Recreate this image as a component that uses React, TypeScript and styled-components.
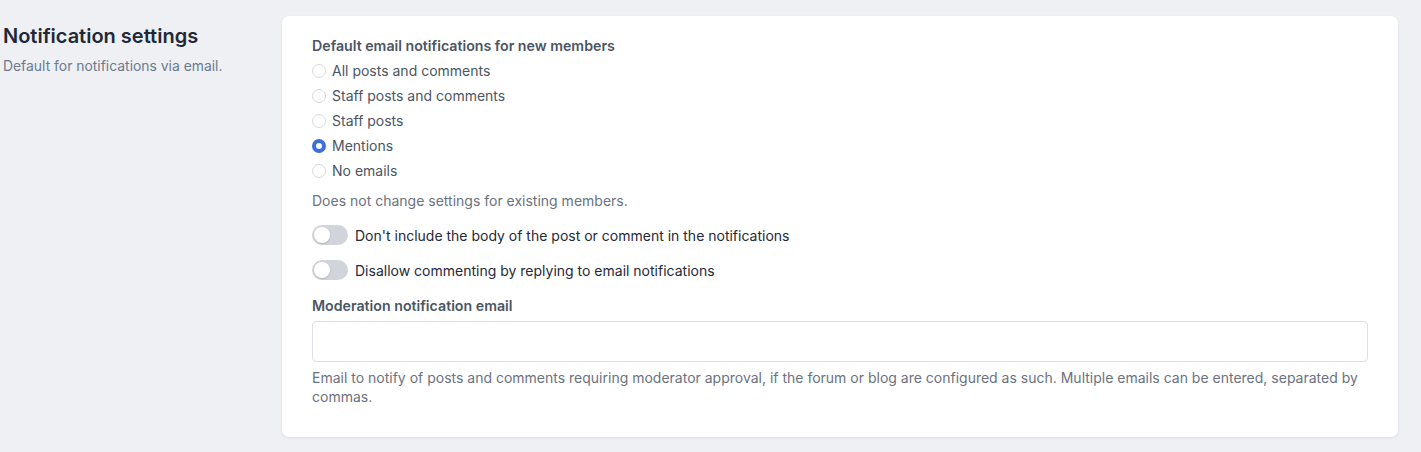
import React from 'react';
import styled, { createGlobalStyle } from 'styled-components';

const GlobalStyle = createGlobalStyle`
  html, body {
    margin: 0;
    padding: 0;
    background: #eff0f4;
    font-family: Inter, "Noto Sans", sans-serif;
  }
`;

const Page = styled.div`
  display: flex;
  align-items: flex-start;
  padding: 16px 23px 15px 3px;
  min-height: 452px;
  box-sizing: border-box;
`;

const Aside = styled.div`
  width: 279px;
  flex: none;
  padding-top: 7px;
`;

const Title = styled.h2`
  margin: 0;
  font-size: 20px;
  line-height: 26px;
  font-weight: 600;
  color: #1f2937;
`;

const Subtitle = styled.p`
  margin: 8px 0 0;
  font-size: 13.9px;
  line-height: 18px;
  color: #6b7a8f;
`;

const Card = styled.div`
  flex: 1;
  background: #fff;
  border-radius: 7px;
  box-shadow: 0 1px 3px rgba(15, 23, 42, 0.08);
  padding: 21px 30px 31px;
`;

const Label = styled.div<{ $top?: number }>`
  margin-top: ${(p) => p.$top ?? 0}px;
  font-size: 14.2px;
  line-height: 18px;
  font-weight: 600;
  color: #4b5563;
`;

const RadioList = styled.div`
  display: flex;
  flex-direction: column;
  margin-top: 3px;
`;

const RadioRow = styled.label`
  display: flex;
  align-items: center;
  height: 25px;
  gap: 6px;
  font-size: 14px;
  color: #4b5563;
`;

const RadioDot = styled.span<{ $checked?: boolean }>`
  width: 14px;
  height: 14px;
  border-radius: 50%;
  box-sizing: border-box;
  background: #fff;
  border: ${(p) => (p.$checked ? '4.5px solid #3b6fe0' : '1px solid #d6d9df')};
  flex: none;
`;

const Help = styled.p<{ $top?: number }>`
  margin: ${(p) => p.$top ?? 8}px 0 0;
  font-size: 14px;
  line-height: 19px;
  color: #6b7280;
`;

const ToggleRow = styled.label<{ $top: number }>`
  display: flex;
  align-items: center;
  gap: 7px;
  margin-top: ${(p) => p.$top}px;
  height: 20px;
  font-size: 14px;
  color: #1f2937;
`;

const Toggle = styled.span`
  width: 36px;
  height: 20px;
  border-radius: 10px;
  background: #d1d5db;
  position: relative;
  flex: none;
  &::after {
    content: '';
    position: absolute;
    left: 2px;
    top: 2px;
    width: 16px;
    height: 16px;
    border-radius: 50%;
    background: #fff;
    box-shadow: 0 1px 2px rgba(0, 0, 0, 0.15);
  }
`;

const Input = styled.input`
  display: block;
  width: 100%;
  box-sizing: border-box;
  height: 41px;
  margin-top: 6px;
  border: 1px solid #dcdfe5;
  border-radius: 4px;
  padding: 0 10px;
  font: inherit;
  font-size: 14px;
  outline: none;
`;

const options = [
  'All posts and comments',
  'Staff posts and comments',
  'Staff posts',
  'Mentions',
  'No emails',
];

export default function App() {
  return (
    <>
      <GlobalStyle />
      <Page>
        <Aside>
          <Title>Notification settings</Title>
          <Subtitle>Default for notifications via email.</Subtitle>
        </Aside>
        <Card>
          <Label>Default email notifications for new members</Label>
          <RadioList>
            {options.map((o) => (
              <RadioRow key={o}>
                <RadioDot $checked={o === 'Mentions'} />
                {o}
              </RadioRow>
            ))}
          </RadioList>
          <Help $top={8}>Does not change settings for existing members.</Help>
          <ToggleRow $top={15}>
            <Toggle />
            Don't include the body of the post or comment in the notifications
          </ToggleRow>
          <ToggleRow $top={15}>
            <Toggle />
            Disallow commenting by replying to email notifications
          </ToggleRow>
          <Label $top={17}>Moderation notification email</Label>
          <Input type="text" />
          <Help $top={6}>
            Email to notify of posts and comments requiring moderator approval, if the forum or blog are
            configured as such. Multiple emails can be entered, separated by commas.
          </Help>
        </Card>
      </Page>
    </>
  );
}
